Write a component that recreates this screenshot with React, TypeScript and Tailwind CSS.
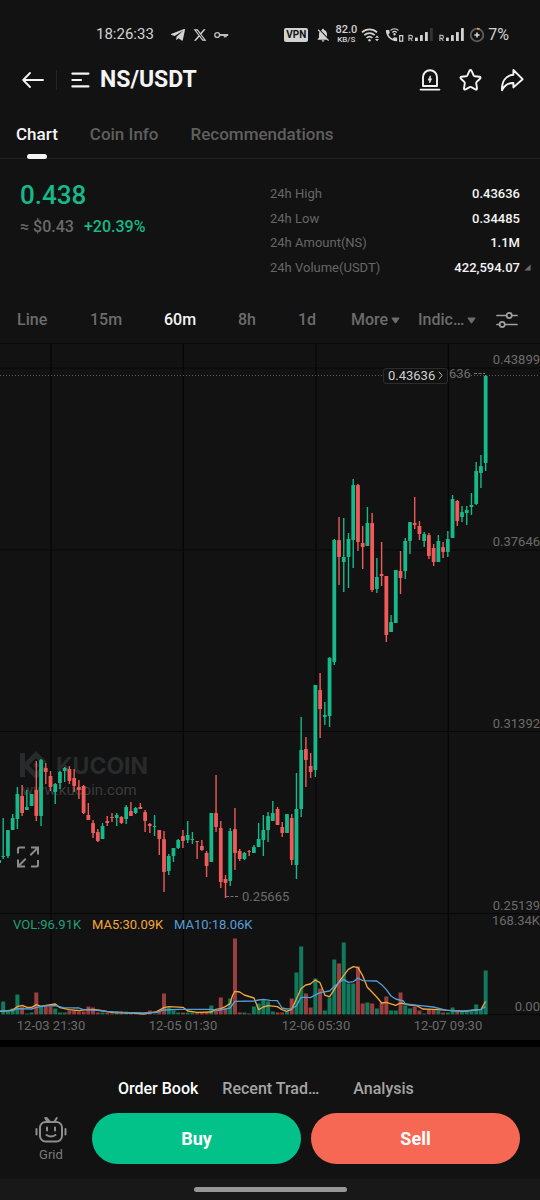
import React from "react";
import { FaTelegramPlane } from "react-icons/fa";
import { FaXTwitter } from "react-icons/fa6";
import { MdNotificationsOff, MdCall } from "react-icons/md";

const UP = "#16b989";
const DOWN = "#ef5a5a";
const VOL_UP = "#117a5c";
const VOL_DOWN = "#9a3f40";

// direction, high, body top, body bottom, low, volume bar height
type Candle = ["u" | "d", number, number, number, number, number];

const CANDLES: Candle[] = [
  ["u", 818, 856, 857, 859, 13],
  ["u", 830, 830, 856, 858, 4],
  ["u", 814, 818, 830, 830, 6],
  ["u", 787, 794, 819, 829, 20],
  ["d", 785, 796, 813, 816, 8],
  ["u", 790, 807, 810, 810, 1],
  ["u", 794, 794, 806, 806, 2],
  ["d", 761, 790, 816, 821, 22],
  ["u", 759, 760, 816, 826, 8],
  ["d", 763, 768, 772, 784, 8],
  ["d", 771, 776, 787, 791, 8],
  ["u", 783, 784, 792, 804, 6],
  ["u", 771, 772, 783, 789, 2],
  ["u", 767, 768, 771, 782, 2],
  ["d", 766, 769, 781, 784, 4],
  ["d", 769, 778, 786, 792, 4],
  ["d", 780, 787, 790, 799, 3],
  ["d", 785, 786, 813, 814, 3],
  ["d", 803, 815, 820, 820, 8],
  ["d", 820, 823, 833, 838, 7],
  ["d", 829, 832, 841, 842, 2],
  ["u", 823, 826, 839, 839, 2],
  ["d", 816, 821, 823, 826, 2],
  ["d", 813, 817, 818, 822, 1],
  ["u", 813, 815, 818, 826, 3],
  ["d", 816, 817, 823, 824, 3],
  ["u", 805, 807, 819, 824, 3],
  ["d", 802, 811, 816, 816, 2],
  ["u", 807, 808, 813, 814, 2],
  ["d", 803, 807, 809, 809, 1],
  ["d", 810, 812, 821, 832, 1],
  ["d", 823, 824, 826, 833, 4],
  ["u", 815, 826, 827, 836, 1],
  ["d", 830, 830, 839, 855, 3],
  ["d", 831, 839, 872, 892, 21],
  ["u", 854, 856, 871, 875, 7],
  ["u", 848, 848, 856, 862, 4],
  ["u", 839, 840, 848, 849, 2],
  ["d", 830, 836, 841, 848, 2],
  ["u", 821, 835, 840, 843, 2],
  ["u", 832, 839, 840, 844, 2],
  ["d", 841, 841, 842, 859, 2],
  ["d", 840, 846, 850, 851, 2],
  ["d", 851, 853, 866, 877, 2],
  ["u", 813, 813, 862, 862, 9],
  ["d", 775, 813, 827, 832, 4],
  ["d", 821, 828, 882, 888, 17],
  ["d", 875, 879, 883, 898, 6],
  ["u", 828, 831, 881, 886, 16],
  ["d", 808, 829, 853, 870, 76],
  ["d", 849, 851, 859, 861, 2],
  ["u", 852, 853, 859, 860, 2],
  ["d", 850, 851, 852, 856, 1],
  ["u", 845, 847, 853, 853, 8],
  ["u", 823, 839, 847, 847, 11],
  ["u", 815, 830, 840, 856, 15],
  ["u", 812, 816, 830, 842, 13],
  ["u", 801, 813, 821, 821, 3],
  ["d", 807, 809, 825, 825, 2],
  ["d", 822, 827, 833, 837, 2],
  ["u", 814, 814, 833, 833, 3],
  ["d", 814, 818, 860, 865, 16],
  ["u", 773, 809, 865, 879, 42],
  ["u", 717, 750, 809, 817, 68],
  ["d", 737, 749, 760, 787, 21],
  ["d", 753, 766, 772, 778, 7],
  ["u", 685, 685, 770, 777, 36],
  ["d", 673, 690, 709, 738, 26],
  ["u", 702, 715, 717, 725, 4],
  ["u", 657, 658, 716, 727, 17],
  ["u", 539, 540, 662, 665, 55],
  ["d", 517, 540, 557, 585, 51],
  ["u", 518, 557, 562, 592, 72],
  ["u", 533, 539, 557, 588, 31],
  ["u", 479, 485, 540, 568, 31],
  ["d", 484, 485, 542, 551, 48],
  ["d", 526, 543, 547, 569, 11],
  ["u", 507, 523, 546, 546, 12],
  ["d", 513, 523, 590, 592, 11],
  ["u", 558, 577, 589, 593, 6],
  ["d", 542, 574, 576, 586, 12],
  ["d", 576, 576, 635, 642, 18],
  ["u", 615, 622, 632, 632, 4],
  ["u", 570, 570, 623, 623, 4],
  ["d", 551, 571, 578, 594, 22],
  ["u", 538, 541, 571, 579, 9],
  ["u", 522, 522, 541, 554, 6],
  ["d", 497, 523, 525, 529, 8],
  ["d", 521, 526, 534, 540, 4],
  ["u", 532, 534, 541, 547, 1],
  ["d", 533, 535, 556, 559, 5],
  ["d", 544, 548, 562, 566, 5],
  ["u", 535, 541, 562, 562, 4],
  ["d", 542, 547, 552, 558, 2],
  ["u", 531, 539, 552, 557, 2],
  ["u", 495, 499, 538, 538, 7],
  ["d", 500, 501, 521, 526, 3],
  ["u", 506, 512, 517, 522, 3],
  ["u", 506, 510, 513, 525, 4],
  ["u", 493, 505, 507, 515, 4],
  ["u", 462, 471, 504, 505, 10],
  ["u", 455, 466, 473, 488, 5],
  ["u", 375, 376, 463, 471, 44],
];

// moving averages, plotted on a grid three times finer than the candles
const MA5 =
  "0,304 24,302 38,300 52,290 67,286 81,292 95,292 109,284 123,289 138,286 166,282 180,293 208,299 237,302 265,298 294,300 340,308 400,309 430,312 470,305 492,293 506,290 549,292 563,303 592,307 634,306 648,298 662,296 676,290 690,281 698,255 705,244 719,246 733,255 762,264 776,299 790,291 804,287 832,290 846,299 860,304 875,298 889,268 903,236 917,225 931,222 946,210 960,218 975,256 989,260 1003,238 1017,216 1031,197 1045,178 1060,170 1074,173 1088,197 1102,232 1116,246 1130,261 1145,279 1159,277 1187,286 1201,279 1230,285 1250,287 1268,297 1300,298 1358,302 1390,304 1443,298 1457,274";
const MA10 =
  "0,303 38,302 52,296 95,297 109,292 130,288 166,287 190,293 237,294 250,299 290,301 320,304 370,307 430,309 470,307 490,300 540,298 630,298 655,301 690,294 705,274 762,273 776,270 790,268 810,271 832,272 846,294 860,297 875,296 889,288 903,262 917,262 931,263 960,248 989,243 1003,229 1017,218 1031,208 1045,217 1060,215 1074,204 1088,212 1130,213 1145,224 1159,239 1173,258 1187,267 1210,273 1216,282 1260,287 1300,291 1340,301 1390,303 1443,298 1457,290";

const GRID_X = [51, 183.3, 316, 448.3];
const GRID_Y = [368, 550, 731.5, 913.5, 1014.5];
const PRICE_LABELS: [string, number][] = [
  ["0.43899", 364],
  ["0.37646", 546],
  ["0.31392", 728],
  ["0.25139", 910],
  ["168.34K", 925],
  ["0.00", 1011],
];
const DATE_LABELS: [string, number][] = [
  ["12-03 21:30", 51],
  ["12-05 01:30", 183],
  ["12-06 05:30", 316],
  ["12-07 09:30", 448],
];

function Signal({ faded }: { faded?: boolean }) {
  return (
    <svg width="25" height="15" viewBox="0 0 25 15" fill="#d2d2d2" aria-hidden="true">
      <path d="M.9 14V8.4h2.1a1.5 1.5 0 0 1 0 3H.9M2.6 11.4 4.3 14" fill="none" stroke="#b8b8b8" strokeWidth="1.1" />
      <rect x="7" y="10.5" width="2.8" height="3.5" rx=".5" />
      <rect x="12" y="8" width="2.8" height="6" rx=".5" />
      <rect x="17" y="5" width="2.8" height="9" rx=".5" />
      <rect x="22" y="1" width="2.8" height="13" rx=".5" fill={faded ? "#333" : "#d2d2d2"} />
    </svg>
  );
}

function StatusBar() {
  return (
    <div className="flex h-[58px] items-center justify-between pt-[11px] pr-[31px] pl-24 text-[#d2d2d2]">
      <div className="flex items-center">
        <span className="w-[74px] text-[15px]">18:26:33</span>
        <FaTelegramPlane size={16} className="mr-[7px]" />
        <FaXTwitter size={14} className="mr-[7px]" />
        <svg width="15" height="8" viewBox="0 0 15 8" fill="none" stroke="#bcbcbc" strokeWidth="1.4" aria-hidden="true">
          <circle cx="3.2" cy="4" r="2.4" />
          <path d="M5.6 3.6h8.6M5.6 4.4h8.6M10.5 4v2.6M12 4v2.2" />
        </svg>
      </div>
      <div className="flex items-center">
        <span className="mr-[7px] flex h-[14px] w-6 items-center justify-center rounded-[2px] bg-[#d2d2d2] text-[10px] font-bold text-[#121212]">
          VPN
        </span>
        <MdNotificationsOff size={16} className="mr-1" />
        <span className="mr-1 flex w-[22px] flex-col items-center pt-px">
          <span className="text-[11px] leading-[10px] font-medium">82.0</span>
          <span className="text-[8px] leading-[10px] font-medium">KB/S</span>
        </span>
        <svg width="19" height="16" viewBox="0 0 19 16" fill="none" stroke="#d2d2d2" strokeWidth="1.8" className="mr-1" aria-hidden="true">
          <path d="M1 5.4a11 11 0 0 1 15 0M3.3 8.2a7.6 7.6 0 0 1 10.4 0M5.6 10.9a4.3 4.3 0 0 1 5.8 0" />
          <circle cx="8.5" cy="13.2" r="1.2" fill="#d2d2d2" stroke="none" />
          <path d="m14 10.8 2-2.3 2 2.3zM14 12l2 2.3 2-2.3z" fill="#d2d2d2" stroke="none" />
        </svg>
        <span className="relative mr-1 h-4 w-5">
          <MdCall size={15} className="mt-px" />
          <svg width="20" height="16" viewBox="0 0 20 16" fill="none" stroke="#d2d2d2" strokeWidth="1.2" className="absolute inset-0" aria-hidden="true">
            <path d="M6.5 3.4a6 6 0 0 1 8 0M8.3 5.5a3.2 3.2 0 0 1 4.4 0" />
            <circle cx="10.5" cy="7.2" r=".6" />
            <rect x="15.7" y="8.6" width="3" height="5.6" />
          </svg>
        </span>
        <span className="mr-[6px]">
          <Signal faded />
        </span>
        <span className="mr-[5px]">
          <Signal />
        </span>
        <svg width="16" height="16" viewBox="0 0 16 16" fill="none" className="mr-[3px]" aria-hidden="true">
          <circle cx="8" cy="8" r="6.3" stroke="#5e5e5e" strokeWidth="1.8" />
          <path d="M8 1.7a6.3 6.3 0 0 1 2.6.6" stroke="#d9a520" strokeWidth="1.8" />
          <path d="M8 5.4v5.2M5.4 8h5.2" stroke="#d8d8d8" strokeWidth="1.6" />
        </svg>
        <span className="text-[16px]">7%</span>
      </div>
    </div>
  );
}

function Header() {
  return (
    <header className="flex h-[43px] items-center pr-4 pl-[22px] text-[#f4f4f4]">
      <button type="button" aria-label="Back">
        <svg width="22" height="16" viewBox="0 0 22 16" fill="none" stroke="currentColor" strokeWidth="1.8" strokeLinecap="round" strokeLinejoin="round">
          <path d="M21 8H1.2M8 1 1.2 8 8 15" />
        </svg>
      </button>
      <span className="mr-[14px] ml-3 h-5 w-px bg-[#262626]" />
      <button type="button" className="flex items-center gap-[10px]">
        <svg width="19" height="16" viewBox="0 0 19 16" fill="none" stroke="currentColor" strokeWidth="2.2" strokeLinecap="round" aria-hidden="true">
          <path d="M1.4 1.6h16M1.4 8H10M1.4 14.4h16" />
        </svg>
        <span className="text-[23px] leading-8 font-bold">NS/USDT</span>
      </button>
      <div className="ml-auto flex items-center gap-[18px]">
        <button type="button" aria-label="Price alert">
          <svg width="22" height="24" viewBox="0 0 22 24" fill="none" stroke="currentColor" strokeWidth="1.9" strokeLinecap="round" strokeLinejoin="round">
            <path d="M4 18V9.2a7 7 0 0 1 14 0V18zM1.6 21.6h18.8" />
            <path d="M11.300 8.200v2.600h1.200l-1.800 4v-2.700H9.500z" strokeWidth=".8" fill="currentColor" />
          </svg>
        </button>
        <button type="button" aria-label="Add to favorites">
          <svg width="23" height="24" viewBox="0 0 23 24" fill="none" stroke="currentColor" strokeWidth="1.9" strokeLinejoin="round">
            <path d="M10.4 2.9q1.1-1.8 2.2 0l2 4.4q.4.8 1.2.9l4.6.6q2 .4.6 1.9l-3.3 3.2q-.6.6-.5 1.4l.8 4.8q.2 2-1.6 1.2l-4.1-2.2q-.8-.4-1.6 0l-4.1 2.2q-1.8.8-1.6-1.2l.8-4.8q.1-.8-.5-1.4L2 10.7Q.6 9.200 2.600 8.800l4.600-.6q.8-.1 1.200-.9z" />
          </svg>
        </button>
        <button type="button" aria-label="Share">
          <svg width="24" height="24" viewBox="0 0 24 24" fill="none" stroke="currentColor" strokeWidth="1.9" strokeLinejoin="round">
            <path d="M13.400 2 22.600 11.200 13.400 19.400V15C8.400 14.800 4.800 17 2 22.200 1.600 13.400 5.600 7.600 13.400 6.800z" />
          </svg>
        </button>
      </div>
    </header>
  );
}

function PageTabs() {
  return (
    <nav className="flex h-[58px] items-start gap-8 border-b border-[#1f1f1f] px-4 text-[17px] font-medium text-[#5f5f5f]">
      <button type="button" className="flex h-[58px] flex-col items-center justify-between pt-5 text-[#f4f4f4]">
        <span className="leading-[26px]">Chart</span>
        <span className="h-[5px] w-5 rounded-full bg-[#f4f4f4]" />
      </button>
      <button type="button" className="pt-5 leading-[26px]">
        Coin Info
      </button>
      <button type="button" className="pt-5 leading-[26px]">
        Recommendations
      </button>
    </nav>
  );
}

function Summary() {
  const stats = [
    ["24h High", "0.43636"],
    ["24h Low", "0.34485"],
    ["24h Amount(NS)", "1.1M"],
    ["24h Volume(USDT)", "422,594.07"],
  ];
  return (
    <section className="grid grid-cols-2 pt-[22px]">
      <div className="pl-5">
        <p className="text-[26px] leading-[28px] font-medium text-[#16b989]">0.438</p>
        <p className="mt-2 flex gap-[10px] text-[16px] leading-5 font-medium">
          <span className="text-[#6a6a6a]">≈ $0.43</span>
          <span className="text-[#16b989]">+20.39%</span>
        </p>
      </div>
      <dl className="mt-[5px] flex h-[90px] flex-col justify-between pr-5 text-[13px] leading-4">
        {stats.map(([label, value]) => (
          <div key={label} className="flex justify-between">
            <dt className="text-[#666]">{label}</dt>
            <dd className="relative font-medium text-[#f4f4f4]">
              {value}
              {label.startsWith("24h Volume") && (
                <svg width="7" height="7" viewBox="0 0 7 7" className="absolute top-1 -right-[11px]" aria-hidden="true">
                  <path d="M6.600.4v6.200H.4z" fill="#6c6c6c" />
                </svg>
              )}
            </dd>
          </div>
        ))}
      </dl>
    </section>
  );
}

function Caret() {
  return (
    <svg width="9" height="7" viewBox="0 0 9 7" aria-hidden="true">
      <path d="M1.200.5h6.600q1.200 0 .5 1L5.200 6q-.7.900-1.400 0L.7 1.500Q0 .5 1.200.5z" fill="#6c6c6c" />
    </svg>
  );
}

function Intervals() {
  return (
    <div className="mt-[21px] grid h-[47px] grid-cols-[73fr_74fr_74fr_60fr_53fr_67fr_78fr_28fr] items-center border-b border-[#0a0a0a] pr-4 pl-[17px] text-[16px] font-medium text-[#6c6c6c]">
      <button type="button" className="text-left">Line</button>
      <button type="button" className="text-left">15m</button>
      <button type="button" className="text-left text-[#f4f4f4]">60m</button>
      <button type="button" className="text-left">8h</button>
      <button type="button" className="text-left">1d</button>
      <button type="button" className="flex items-center gap-[3px]">
        More
        <Caret />
      </button>
      <button type="button" className="flex items-center gap-[3px]">
        Indic…
        <Caret />
      </button>
      <button type="button" aria-label="Chart settings">
        <svg width="22" height="18" viewBox="0 0 22 18" fill="none" stroke="#a0a0a0" strokeWidth="1.7" strokeLinecap="round">
          <path d="M1 4.500h9.500M16 4.500h5M1 13.500h2.500M9 13.500h12" />
          <circle cx="13.200" cy="4.500" r="2.600" />
          <circle cx="6.200" cy="13.500" r="2.600" />
        </svg>
      </button>
    </div>
  );
}

function Chart() {
  return (
    <section className="relative">
      <svg viewBox="0 344 540 696" className="block w-full font-['Roboto',sans-serif] text-[13px]" role="img" aria-label="NS/USDT 60 minute candles">
        <g stroke="#060606" strokeWidth="1.200">
          {GRID_X.map((x) => (
            <line key={x} x1={x} x2={x} y1="344" y2="1014.500" />
          ))}
          {GRID_Y.map((y) => (
            <line key={y} x1="0" x2="540" y1={y} y2={y} />
          ))}
        </g>

        <g fill="#282b2c">
          <path d="M20 753h5v24h-5z" />
          <path d="M25 762 36 751l10.500 10.500-3.600 3.600-6.900-6.900-7 7 7 7 6.900-6.900 3.600 3.500L36 779.500 25 768.500z" />
          <path d="m36 761.800 3.400 3.400-3.400 3.400-3.400-3.400z" />
          <text x="56" y="774" className="font-['Inter',sans-serif] text-[23px] font-bold">KUCOIN</text>
        </g>
        <text x="22" y="795" fill="#3b3b3b" className="text-[15px]">www.kucoin.com</text>

        <rect x="0" y="860" width="1" height="3" fill={UP} />
        {CANDLES.map(([dir, high, top, bottom, low, volume], i) => {
          const x = 3.2 + i * 4.73;
          const up = dir === "u";
          return (
            <g key={i}>
              <rect x={x - 2} y={1014.5 - volume} width="4" height={volume} fill={up ? VOL_UP : VOL_DOWN} />
              <g fill={up ? UP : DOWN}>
                <rect x={x - 0.7} y={high} width="1.4" height={low - high} />
                <rect x={x - 1.9} y={top} width="3.8" height={bottom - top} rx=".4" />
              </g>
            </g>
          );
        })}

        <g transform="translate(0 910) scale(.33333)" fill="none" strokeWidth="4" strokeLinejoin="round">
          <polyline points={MA5} stroke="#f2a63a" />
          <polyline points={MA10} stroke="#559fd8" />
        </g>

        <line x1="0" x2="540" y1="375.500" y2="375.500" stroke="#5c5c5c" strokeDasharray="1 2" />
        <path d="M474 373.500h11M226 896.500h12" stroke="#777" strokeDasharray="3 1.500" />

        <g fill="#6b6b6b">
          <text x="449" y="378">636</text>
          <text x="242" y="901">0.25665</text>
          {PRICE_LABELS.map(([label, y]) => (
            <text key={label} x="540" y={y} textAnchor="end">{label}</text>
          ))}
          {DATE_LABELS.map(([label, x]) => (
            <text key={label} x={x} y="1030" textAnchor="middle">{label}</text>
          ))}
        </g>
        <text x="13" y="929" fill="#1f9f7a">VOL:96.91K</text>
        <text x="92" y="929" fill="#f2a63a">MA5:30.09K</text>
        <text x="174" y="929" fill="#559fd8">MA10:18.06K</text>
      </svg>

      <button type="button" className="absolute top-[3.400%] right-[17%] flex h-4 items-center gap-[3px] rounded-[3px] border border-[#2c2c2c] bg-[#121212] px-1 text-[13px] leading-none text-[#cfcfcf]">
        0.43636
        <svg width="5" height="9" viewBox="0 0 5 9" fill="none" stroke="#b0b0b0" aria-hidden="true">
          <path d="M1 .8 4 4.500 1 8.200" />
        </svg>
      </button>
      <button type="button" aria-label="Full screen" className="absolute top-[72%] left-[3%]">
        <svg width="24" height="24" viewBox="0 0 24 24" fill="none" stroke="#8b8b8b" strokeWidth="2">
          <path d="M2 8.500V4q0-1.500 1.500-1.500H9M15 2.500h7v7M21.500 3l-7.200 7.200M22 15v5q0 1.500-1.500 1.500H15M9 21.500H2v-7M2.500 21l7.200-7.200" />
        </svg>
      </button>
    </section>
  );
}

function BottomPanel() {
  return (
    <footer className="flex flex-1 flex-col border-t-[7px] border-black">
      <nav className="flex items-center pt-[31px] pl-[118px] text-[16px] leading-[22px] font-medium text-[#a5a5a5]">
        <button type="button" className="mr-6 text-white">Order Book</button>
        <button type="button" className="mr-[34px]">Recent Trad…</button>
        <button type="button">Analysis</button>
      </nav>
      <div className="mt-[13px] flex h-[51px] gap-[10px] pr-5 pl-[35px]">
        <button type="button" className="mr-[15px] flex w-8 flex-col items-center justify-between text-[13px] leading-[18px] text-[#7a7a7a]">
          <svg width="32" height="30" viewBox="0 -2 32 30" fill="none" stroke="#8e8e8e" strokeWidth="2" strokeLinecap="round" aria-hidden="true">
            <rect x="5" y="7" width="22" height="19.500" rx="5.500" />
            <path d="m10.200 3 2.300 3.500M14.500 6.500 11.500 3M21.800 3l-2.300 3.500M1.500 14v5.500M30.500 14v5.500M12 12.500v3M20 12.500v3M11.500 20q4.500 3.200 9 0" />
          </svg>
          Grid
        </button>
        <button type="button" className="flex-1 rounded-full bg-[#02c289] text-[18px] font-bold text-white">Buy</button>
        <button type="button" className="flex-1 rounded-full bg-[#f76854] text-[18px] font-bold text-white">Sell</button>
      </div>
      <div className="mt-auto flex h-[21px] items-center justify-center bg-[#181818]">
        <span className="h-[5px] w-[153px] rounded-full bg-[#969696]" />
      </div>
    </footer>
  );
}

export default function App() {
  return (
    <main className="flex min-h-screen flex-col bg-[#121212] font-['Roboto',sans-serif]">
      <StatusBar />
      <Header />
      <PageTabs />
      <Summary />
      <Intervals />
      <Chart />
      <BottomPanel />
    </main>
  );
}
